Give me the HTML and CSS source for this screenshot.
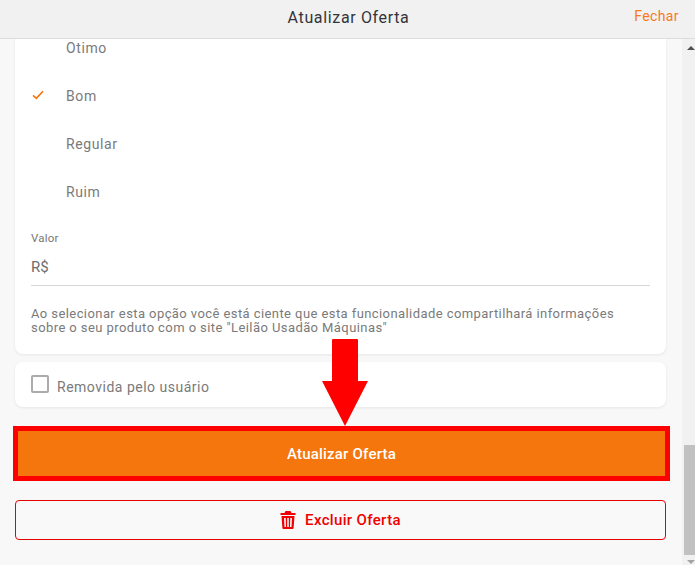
FILE: index.html
```html
<!DOCTYPE html>
<html lang="en">
<head>
    <meta charset="UTF-8">
    <meta name="viewport" content="width=device-width, initial-scale=1.0">
    <title>Atualizar Oferta</title>
    <link rel="stylesheet" href="styles.css">
</head>
<body>

    <header class="top-bar">
        <h1 class="top-title">Atualizar Oferta</h1>
        <span class="top-close">Fechar</span>
    </header>

    <div class="page-body">
        <main class="content">
            <section class="card card-main">
                <ul class="option-list">
                    <li class="option">Otimo</li>
                    <li class="option">
                        <svg class="option-check" viewBox="0 0 14 12"><path d="M1 6.5 L5 10 L13 1.5" fill="none" stroke="#f5760d" stroke-width="2"/></svg>
                        Bom
                    </li>
                    <li class="option">Regular</li>
                    <li class="option">Ruim</li>
                </ul>

                <div class="field">
                    <label class="field-label">Valor</label>
                    <div class="field-input">R$</div>
                </div>

                <p class="notice">Ao selecionar esta opção você está ciente que esta funcionalidade compartilhará informações sobre o seu produto com o site "Leilão Usadão Máquinas"</p>
            </section>

            <section class="card card-check">
                <span class="checkbox"></span>
                <span class="check-label">Removida pelo usuário</span>
            </section>

            <button class="btn-update">Atualizar Oferta</button>

            <button class="btn-delete">
                <svg class="trash-icon" viewBox="0 0 16 18">
                    <path fill="#f00000" d="M5.5 0 H10.5 L11.5 2 H15.5 V4 H0.5 V2 H4.5 Z"/>
                    <path fill="#f00000" fill-rule="evenodd" d="M1.5 5 H14.5 L13.6 17 Q13.5 18 12.5 18 H3.5 Q2.5 18 2.4 17 Z M4 7 L4.5 16 H6 L5.7 7 Z M7.2 7 V16 H8.8 V7 Z M10.3 7 L10 16 H11.5 L12 7 Z"/>
                </svg>
                Excluir Oferta
            </button>
        </main>

        <div class="scrollbar">
            <span class="scroll-up"></span>
            <span class="scroll-thumb"></span>
            <span class="scroll-down"></span>
        </div>
    </div>

    <!-- red arrow pointing at the button -->
    <svg class="arrow" viewBox="0 0 46 87"><path fill="#ff0000" d="M10 1 Q10 0 11 0 H35 Q36 0 36 1 V42 H46 L23 87 L0 42 H10 Z"/></svg>

</body>
</html>
```

FILE: styles.css
```css
* {
    box-sizing: border-box;
}

body {
    font-family: Roboto, Arial, sans-serif;
    margin: 0;
    height: 565px;
    overflow: hidden;
    background-color: #f8f8f8;
    display: flex;
    flex-direction: column;
}

.top-bar {
    height: 39px;
    flex-shrink: 0;
    background: #f1f1f1;
    border-bottom: 1px solid #dcdcdc;
    display: flex;
    align-items: center;
    justify-content: center;
    padding: 0 0 4px 2px;
    position: relative;
}

.top-title {
    margin: 0;
    font-size: 16px;
    font-weight: 400;
    letter-spacing: 0.65px;
    color: #33353a;
}

.top-close {
    position: absolute;
    right: 16px;
    top: 8px;
    font-size: 14px;
    letter-spacing: 0.4px;
    color: #f87a1c;
}

.page-body {
    flex: 1;
    display: flex;
    min-height: 0;
}

.content {
    flex: 1;
    overflow: hidden;
    padding: 0 16px 0 15px;
}

.card {
    background: white;
    border-radius: 8px;
    box-shadow: 0 1px 3px rgba(0, 0, 0, 0.08);
}

.card-main {
    height: 315px;
    border-radius: 0 0 8px 8px;
    padding: 0 16px;
    overflow: hidden;
}

.option-list {
    list-style: none;
    margin: -15px 0 0;
    padding: 0;
}

.option {
    height: 48px;
    display: flex;
    align-items: center;
    padding-left: 35px;
    position: relative;
    font-size: 14px;
    letter-spacing: 0.6px;
    color: #7a7a7a;
}

.option-check {
    position: absolute;
    left: 1px;
    top: 18px;
    width: 12px;
    height: 10px;
}

.field {
    margin-top: 14px;
}

.field-label {
    display: block;
    font-size: 11.5px;
    line-height: 16px;
    letter-spacing: 0.2px;
    color: #777;
}

.field-input {
    height: 36px;
    margin-top: 4px;
    padding-top: 7px;
    border-bottom: 1px solid #d8d8d8;
    font-size: 15px;
    line-height: 20px;
    color: #6e6e6e;
}

.notice {
    margin: 21px 30px 0 0;
    font-size: 13px;
    line-height: 14px;
    letter-spacing: 0.42px;
    color: #7a7a7a;
}

.card-check {
    height: 45px;
    margin-top: 8px;
    padding: 0 16px 0 17px;
    display: flex;
    align-items: center;
    gap: 8px;
}

.checkbox {
    width: 18px;
    height: 18px;
    border: 2px solid #ababab;
    border-radius: 2px;
    margin: 0 -1px 1px -1px;
}

.check-label {
    padding: 5px 0 0 1px;
    font-size: 14px;
    letter-spacing: 0.5px;
    color: #7a7a7a;
}

.btn-update {
    display: block;
    width: 657px;
    height: 55px;
    margin: 19px 0 0 -2px;
    background: #f5760d;
    border: 5px solid #ff0000;
    color: white;
    font-family: inherit;
    font-size: 15px;
    font-weight: 500;
    letter-spacing: 0.2px;
}

.btn-delete {
    width: 651px;
    height: 40px;
    margin-top: 19px;
    background: #f9f9f9;
    border: 1px solid #e60000;
    border-radius: 4px;
    color: #f00000;
    font-family: inherit;
    font-size: 15px;
    font-weight: 500;
    letter-spacing: 0.35px;
    display: flex;
    align-items: center;
    justify-content: center;
    gap: 9px;
}

.trash-icon {
    width: 16px;
    height: 18px;
}

.scrollbar {
    width: 13px;
    flex-shrink: 0;
    background: #f1f1f1;
    position: relative;
}

.scroll-up,
.scroll-down {
    position: absolute;
    left: 5px;
    width: 0;
    height: 0;
    border-left: 4px solid transparent;
    border-right: 4px solid transparent;
}

.scroll-up {
    top: 7px;
    border-bottom: 4px solid #505050;
}

.scroll-down {
    bottom: 1px;
    border-top: 4px solid #a3a3a3;
}

.scroll-thumb {
    position: absolute;
    top: 406px;
    left: 2px;
    right: 0;
    height: 110px;
    background: #c1c1c1;
}

.arrow {
    position: absolute;
    left: 322px;
    top: 339px;
    width: 46px;
    height: 87px;
}
```
